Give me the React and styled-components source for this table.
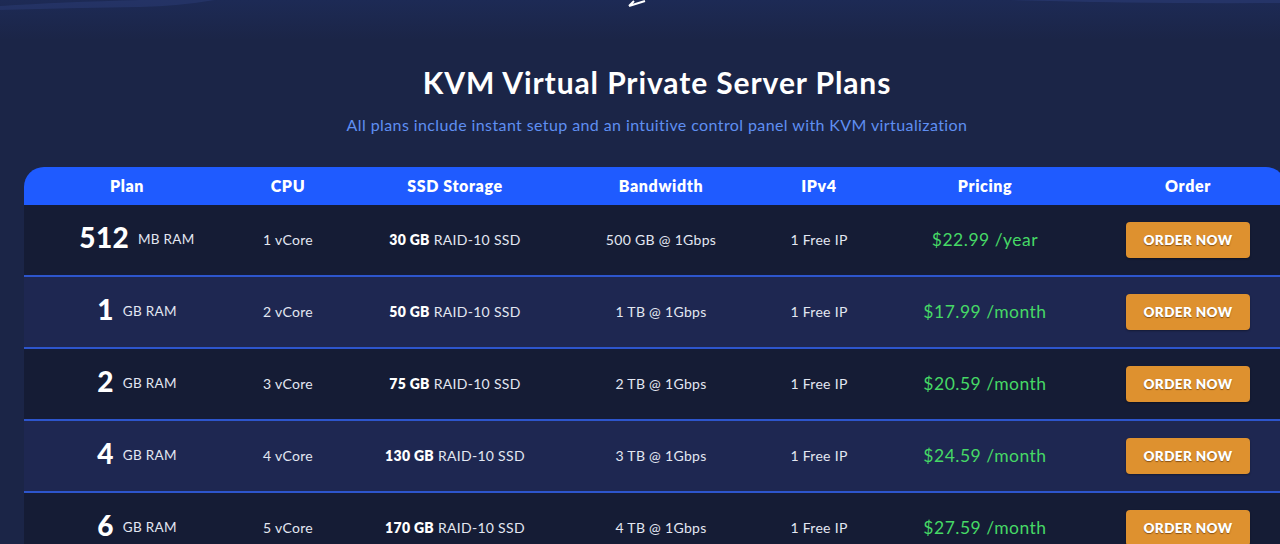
import styled, { createGlobalStyle } from "styled-components";

const GlobalStyle = createGlobalStyle`
  html, body {
    margin: 0;
    padding: 0;
    background: #1b2547;
    overflow: hidden;
  }
  body {
    font-family: Lato, "Open Sans", sans-serif;
    color: #fff;
  }
`;

const COLUMNS = "206px 116px 218px 194px 122px 210px 196px";

const plans = [
  { size: "512", unit: "MB RAM", cpu: "1 vCore", disk: "30 GB", bw: "500 GB @ 1Gbps", price: "$22.99 /year" },
  { size: "1", unit: "GB RAM", cpu: "2 vCore", disk: "50 GB", bw: "1 TB @ 1Gbps", price: "$17.99 /month" },
  { size: "2", unit: "GB RAM", cpu: "3 vCore", disk: "75 GB", bw: "2 TB @ 1Gbps", price: "$20.59 /month" },
  { size: "4", unit: "GB RAM", cpu: "4 vCore", disk: "130 GB", bw: "3 TB @ 1Gbps", price: "$24.59 /month" },
  { size: "6", unit: "GB RAM", cpu: "5 vCore", disk: "170 GB", bw: "4 TB @ 1Gbps", price: "$27.59 /month" },
];

const Page = styled.div`
  width: 1280px;
  height: 544px;
  overflow: hidden;
  background: linear-gradient(180deg, #1d2a55 0%, #1b2547 40px, #1b2547 100%);
`;

const Waves = styled.svg`
  display: block;
  width: 1280px;
  height: 12px;
`;

const Intro = styled.header`
  display: flex;
  flex-direction: column;
  align-items: center;
  padding: 51px 0 0 34px;
`;

const Title = styled.h2`
  margin: 0;
  font-size: 30px;
  font-weight: 700;
  letter-spacing: 0.9px;
  line-height: 38px;
`;

const Subtitle = styled.p`
  margin: 14px 0 0;
  font-size: 16px;
  letter-spacing: 0.4px;
  line-height: 20px;
  color: #5f8ff2;
`;

const Table = styled.div`
  margin: 32px 0 0 24px;
  width: 1262px;
  border-radius: 20px 20px 0 0;
  overflow: hidden;
`;

const HeadRow = styled.div`
  display: grid;
  grid-template-columns: ${COLUMNS};
  height: 38px;
  align-items: center;
  background: #1f5bff;
`;

const HeadCell = styled.div`
  text-align: center;
  font-size: 16px;
  font-weight: 800;
  letter-spacing: 0.6px;
  margin-top: -2px;
`;

const Row = styled.div`
  display: grid;
  grid-template-columns: ${COLUMNS};
  height: 70px;
  align-items: center;
  background: ${({ $alt }) => ($alt ? "#1e2751" : "#151c35")};
  border-bottom: 2px solid #2d55cc;
`;

const Cell = styled.div`
  text-align: center;
  font-size: 14px;
  letter-spacing: 0.3px;
  color: #e3e7f2;
  margin-top: -2px;
`;

const PlanCell = styled(Cell)`
  display: flex;
  align-items: center;
  justify-content: center;
  gap: 9px;
  padding-left: 20px;
`;

const Size = styled.span`
  font-size: 28px;
  line-height: 28px;
  font-weight: 900;
  color: #fff;
  margin-top: -4px;
`;

const Unit = styled.span`
  font-size: 13.5px;
  color: #e3e7f2;
`;

const Strong = styled.b`
  font-weight: 800;
  color: #fff;
`;

const Price = styled(Cell)`
  font-size: 17.5px;
  letter-spacing: 0.5px;
  color: #46d866;
`;

const OrderButton = styled.button`
  justify-self: center;
  width: 124px;
  height: 36px;
  border: none;
  border-radius: 4px;
  background: #de912f;
  color: #fff;
  font-family: Lato, sans-serif;
  font-size: 13.5px;
  font-weight: 800;
  letter-spacing: 0.4px;
  text-shadow: 0 1px 1px rgba(80, 40, 0, 0.6);
  box-shadow: 0 1px 2px rgba(0, 0, 0, 0.35);
  cursor: pointer;
`;

const headers = ["Plan", "CPU", "SSD Storage", "Bandwidth", "IPv4", "Pricing", "Order"];

export default function App() {
  return (
    <>
      <GlobalStyle />
      <Page>
        <Waves viewBox="0 0 1280 12" preserveAspectRatio="none">
          <path d="M0 6 Q 60 2 140 0 L 215 0 Q 180 6 140 7 Q 70 8 0 10 Z" fill="#2a3a72" opacity="0.55" />
          <path d="M1010 0 Q 1150 4 1280 3 L 1280 0 Z" fill="#2c3c74" opacity="0.6" />
          <path d="M629 6 L 634 1 M629 6 L 645 1" stroke="#ffffff" strokeWidth="2" fill="none" />
        </Waves>
        <Intro>
          <Title>KVM Virtual Private Server Plans</Title>
          <Subtitle>
            All plans include instant setup and an intuitive control panel with KVM virtualization
          </Subtitle>
        </Intro>
        <Table>
          <HeadRow>
            {headers.map((h) => (
              <HeadCell key={h}>{h}</HeadCell>
            ))}
          </HeadRow>
          {plans.map((p, i) => (
            <Row key={p.size} $alt={i % 2 === 1}>
              <PlanCell>
                <Size>{p.size}</Size>
                <Unit>{p.unit}</Unit>
              </PlanCell>
              <Cell>{p.cpu}</Cell>
              <Cell>
                <Strong>{p.disk}</Strong> RAID-10 SSD
              </Cell>
              <Cell>{p.bw}</Cell>
              <Cell>1 Free IP</Cell>
              <Price>{p.price}</Price>
              <OrderButton>ORDER NOW</OrderButton>
            </Row>
          ))}
        </Table>
      </Page>
    </>
  );
}
